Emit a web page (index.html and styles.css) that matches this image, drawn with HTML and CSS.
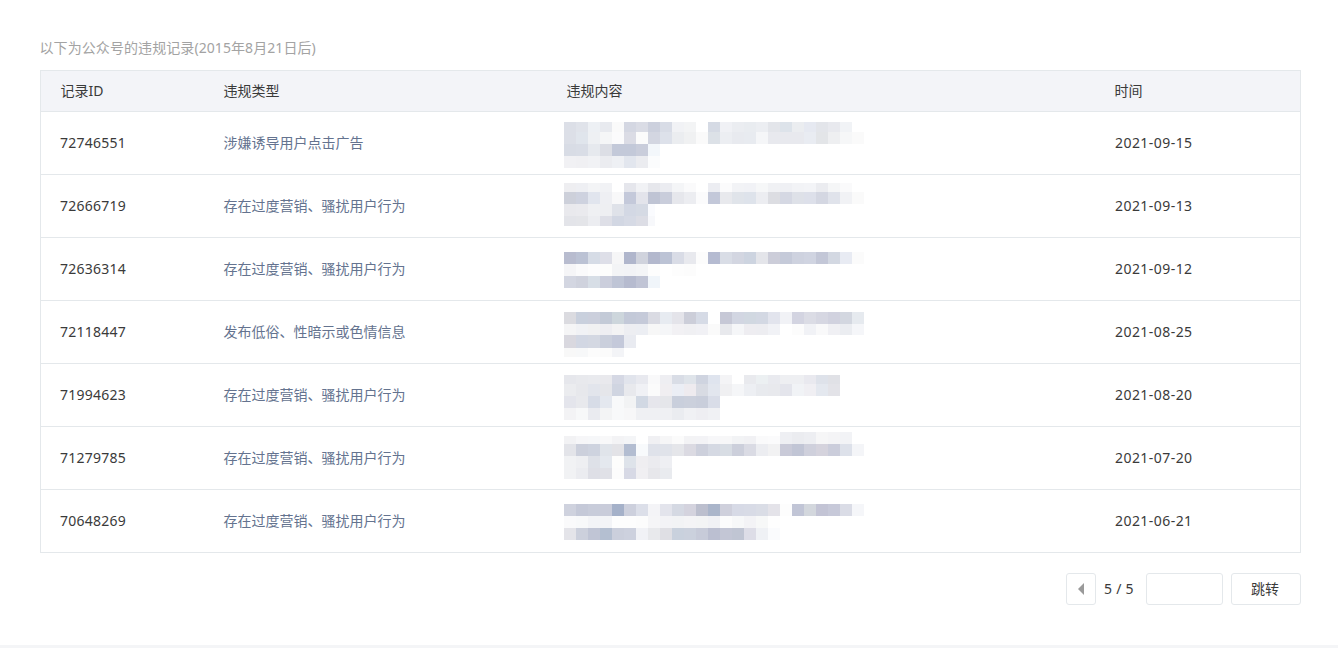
FILE: index.html
```html
<!DOCTYPE html>
<html lang="zh-CN">
<head>
<meta charset="utf-8">
<title>违规记录</title>
<link rel="stylesheet" href="styles.css">
</head>
<body>
<main class="page">
<p class="caption">以下为公众号的违规记录(2015年8月21日后)</p>
<div class="table-wrap">
<table class="records">
<colgroup><col class="col-id"><col class="col-type"><col class="col-content"><col class="col-time"></colgroup>
<thead><tr><th>记录ID</th><th>违规类型</th><th>违规内容</th><th>时间</th></tr></thead>
<tbody>
<tr><td class="id">72746551</td><td class="type">涉嫌诱导用户点击广告</td><td class="content"><svg class="mosaic" viewBox="0 0 312 62">
<g transform="translate(0 10)" class="h10"><rect x="0" fill="#dcdfe7"/><rect x="12" fill="#e0e3ea"/><rect x="24" fill="#edf0f4"/><rect x="36" fill="#e8eaef"/><rect x="48" fill="#fafafa"/><rect x="60" fill="#d4d7e2"/><rect x="72" fill="#dadce5"/><rect x="84" fill="#ccd0dd"/><rect x="96" fill="#d8dce6"/><rect x="108" fill="#f1f2f5"/><rect x="120" fill="#f3f4f5"/><rect x="144" fill="#d5dae4"/><rect x="156" fill="#f0f1f5"/><rect x="168" fill="#ebedf1"/><rect x="180" fill="#e9ecf0"/><rect x="192" fill="#eceef2"/><rect x="204" fill="#e3e5ea"/><rect x="216" fill="#dde3ea"/><rect x="228" fill="#ebedf0"/><rect x="240" fill="#e6e9f1"/><rect x="252" fill="#e3e5ea"/><rect x="264" fill="#e8e9ee"/><rect x="276" fill="#f1f3f6"/></g>
<g transform="translate(0 20)"><rect x="0" fill="#dcdfe7"/><rect x="12" fill="#e0e5ec"/><rect x="24" fill="#eef0f3"/><rect x="36" fill="#f5f6f7"/><rect x="48" fill="#fbfbfc"/><rect x="60" fill="#dbdce5"/><rect x="72" fill="#fbfbfb"/><rect x="84" fill="#d3d6e1"/><rect x="96" fill="#dde1ea"/><rect x="108" fill="#ebedf0"/><rect x="120" fill="#f0f1f2"/><rect x="132" fill="#fafafa"/><rect x="144" fill="#dce1e7"/><rect x="156" fill="#eceef2"/><rect x="168" fill="#e8eaef"/><rect x="180" fill="#e8ebf0"/><rect x="192" fill="#f5f6f8"/><rect x="204" fill="#e8e9ee"/><rect x="216" fill="#e8e9ee"/><rect x="228" fill="#e8e9ee"/><rect x="240" fill="#e9ecf2"/><rect x="252" fill="#e3e5e8"/><rect x="264" fill="#eeeff1"/><rect x="276" fill="#f6f7f8"/><rect x="288" fill="#fafafa"/></g>
<g transform="translate(0 32)"><rect x="0" fill="#d8dce5"/><rect x="12" fill="#d9dde6"/><rect x="24" fill="#e6e9ee"/><rect x="36" fill="#dcdee5"/><rect x="48" fill="#c3c9d9"/><rect x="60" fill="#c3c9d9"/><rect x="72" fill="#c9cddb"/><rect x="84" fill="#f3f7fb"/></g>
<g transform="translate(0 44)"><rect x="0" fill="#f1f1f4"/><rect x="12" fill="#f0f0f3"/><rect x="24" fill="#f1f2f5"/><rect x="36" fill="#ebecf0"/><rect x="48" fill="#eef0f4"/><rect x="60" fill="#e2e6ee"/><rect x="72" fill="#ebecf0"/><rect x="84" fill="#fbfcfd"/></g>
</svg></td><td class="date">2021-09-15</td></tr>
<tr><td class="id">72666719</td><td class="type">存在过度营销、骚扰用户行为</td><td class="content"><svg class="mosaic" viewBox="0 0 312 62">
<g transform="translate(0 8)" class="h9"><rect x="0" fill="#eeeef1"/><rect x="12" fill="#eeeff3"/><rect x="24" fill="#f3f4f6"/><rect x="36" fill="#f1f2f5"/><rect x="60" fill="#e5e6ec"/><rect x="72" fill="#f1f2f5"/><rect x="84" fill="#e6e7ec"/><rect x="96" fill="#ebecf1"/><rect x="108" fill="#f4f5f7"/><rect x="120" fill="#fafafb"/><rect x="144" fill="#ecedf2"/><rect x="156" fill="#fbfbfc"/><rect x="168" fill="#f2f3f6"/><rect x="180" fill="#f1f2f6"/><rect x="192" fill="#f6f7f8"/><rect x="204" fill="#f0f1f4"/><rect x="216" fill="#eff0f4"/><rect x="228" fill="#f2f3f6"/><rect x="240" fill="#f3f4f7"/><rect x="252" fill="#ebecf0"/><rect x="264" fill="#f5f6f7"/><rect x="276" fill="#fafafb"/></g>
<g transform="translate(0 17)"><rect x="0" fill="#cdd0da"/><rect x="12" fill="#ced2df"/><rect x="24" fill="#e1e5ee"/><rect x="36" fill="#eeeff3"/><rect x="48" fill="#f8f8f9"/><rect x="60" fill="#c4c9da"/><rect x="72" fill="#e3e4eb"/><rect x="84" fill="#bfc4d4"/><rect x="96" fill="#c9cddb"/><rect x="108" fill="#e6e7ec"/><rect x="120" fill="#ecedf1"/><rect x="132" fill="#fbfbfc"/><rect x="144" fill="#c3c8d9"/><rect x="156" fill="#e8e9ed"/><rect x="168" fill="#e0e4ea"/><rect x="180" fill="#dee3eb"/><rect x="192" fill="#ecedf1"/><rect x="204" fill="#dcdde2"/><rect x="216" fill="#d5d8e3"/><rect x="228" fill="#dee1e8"/><rect x="240" fill="#dde0ea"/><rect x="252" fill="#d4d7e2"/><rect x="264" fill="#e0e3eb"/><rect x="276" fill="#f1f2f5"/><rect x="288" fill="#fafafa"/></g>
<g transform="translate(0 29)"><rect x="0" fill="#e9e9ed"/><rect x="12" fill="#eaeaee"/><rect x="24" fill="#eff0f3"/><rect x="36" fill="#eeeff2"/><rect x="48" fill="#dfe2e9"/><rect x="60" fill="#d3d8e4"/><rect x="72" fill="#d5dae4"/><rect x="84" class="w7" fill="#fafbfe"/></g>
<g transform="translate(0 41)" class="h10"><rect x="0" fill="#e3e4e9"/><rect x="12" fill="#e4e5e9"/><rect x="24" fill="#ecedf1"/><rect x="36" fill="#dedfe7"/><rect x="48" fill="#d2d7e3"/><rect x="60" fill="#d6dae5"/><rect x="72" fill="#dcdde5"/><rect x="84" class="w7" fill="#f7f8fb"/></g>
</svg></td><td class="date">2021-09-13</td></tr>
<tr><td class="id">72636314</td><td class="type">存在过度营销、骚扰用户行为</td><td class="content"><svg class="mosaic" viewBox="0 0 312 62">
<g transform="translate(0 14)"><rect x="0" fill="#b8bccf"/><rect x="12" fill="#bbc2d4"/><rect x="24" fill="#d6dce6"/><rect x="36" fill="#dedfe8"/><rect x="48" fill="#f6f6f7"/><rect x="60" fill="#b0b6cc"/><rect x="72" fill="#d0d3dd"/><rect x="84" fill="#b3b8cd"/><rect x="96" fill="#bcc3d5"/><rect x="108" fill="#d9dce6"/><rect x="120" fill="#e8e9ee"/><rect x="132" fill="#fcfcfc"/><rect x="144" fill="#b5bbd1"/><rect x="156" fill="#d9dde6"/><rect x="168" fill="#d3d6e1"/><rect x="180" fill="#cdd4e0"/><rect x="192" fill="#e4e5ea"/><rect x="204" fill="#cccdd9"/><rect x="216" fill="#c5cad9"/><rect x="228" fill="#ced2df"/><rect x="240" fill="#d0d4e1"/><rect x="252" fill="#c3c7d7"/><rect x="264" fill="#d3d8e2"/><rect x="276" fill="#e8ebf3"/><rect x="288" fill="#fbfbfb"/></g>
<g transform="translate(0 26)"><rect x="0" fill="#f5f5f7"/><rect x="12" fill="#fafafb"/><rect x="24" fill="#fdfdfd"/><rect x="36" fill="#fdfdfc"/><rect x="48" fill="#f3f4f6"/><rect x="60" fill="#f2f3f6"/><rect x="72" fill="#f4f5f7"/><rect x="84" fill="#fdfdfd"/><rect x="108" fill="#fdfdfd"/><rect x="120" fill="#fcfcfc"/></g>
<g transform="translate(0 38)"><rect x="0" fill="#d3d6e1"/><rect x="12" fill="#cfd2dd"/><rect x="24" fill="#d7dee6"/><rect x="36" fill="#cbcedc"/><rect x="48" fill="#bfc5d6"/><rect x="60" fill="#b6bbcf"/><rect x="72" fill="#c0c4d5"/><rect x="84" fill="#f0f5fa"/></g>
</svg></td><td class="date">2021-09-12</td></tr>
<tr><td class="id">72118447</td><td class="type">发布低俗、性暗示或色情信息</td><td class="content"><svg class="mosaic" viewBox="0 0 312 62">
<g transform="translate(0 11)"><rect x="0" fill="#dbdbe0"/><rect x="12" fill="#c9d0dd"/><rect x="24" fill="#cbcfdc"/><rect x="36" fill="#c3cad7"/><rect x="48" fill="#cdd6dc"/><rect x="60" fill="#c3c9d8"/><rect x="72" fill="#c5cad9"/><rect x="84" fill="#dadbe3"/><rect x="96" fill="#e7ebf1"/><rect x="108" fill="#e4e4ea"/><rect x="120" fill="#ccced9"/><rect x="132" fill="#d6dbe6"/><rect x="156" fill="#c6c8d6"/><rect x="168" fill="#d2d6e2"/><rect x="180" fill="#d1d8e1"/><rect x="192" fill="#d3d8e3"/><rect x="204" fill="#e2e4ed"/><rect x="216" fill="#f1f2f6"/><rect x="228" fill="#d3d4e1"/><rect x="240" fill="#dbdce5"/><rect x="252" fill="#d6d7e2"/><rect x="264" fill="#d1d2df"/><rect x="276" fill="#d3d7e0"/><rect x="288" fill="#e6eaef"/></g>
<g transform="translate(0 23)" class="h11"><rect x="0" fill="#f5f5f6"/><rect x="12" fill="#f1f2f5"/><rect x="24" fill="#f1f1f2"/><rect x="36" fill="#eeeef2"/><rect x="48" fill="#f3f3f4"/><rect x="60" fill="#edeef2"/><rect x="72" fill="#eceef3"/><rect x="84" fill="#f7f7f7"/><rect x="96" fill="#f5f6f8"/><rect x="108" fill="#f2f1f4"/><rect x="120" fill="#f0f0f3"/><rect x="132" fill="#f1f1f5"/><rect x="144" fill="#fafafa"/><rect x="156" fill="#e8e9ed"/><rect x="168" fill="#f5f6f8"/><rect x="180" fill="#eeedf1"/><rect x="192" fill="#ededf1"/><rect x="204" fill="#f1f2f6"/><rect x="228" fill="#fcfcfc"/><rect x="240" fill="#f1f2f6"/><rect x="252" fill="#f9f9fa"/><rect x="264" fill="#f0f0f4"/><rect x="276" fill="#ebedf1"/><rect x="288" fill="#f5f6f9"/></g>
<g transform="translate(0 34)" class="h13"><rect x="0" fill="#d9d8df"/><rect x="12" fill="#d2d7e3"/><rect x="24" fill="#d4d8e2"/><rect x="36" fill="#cacfdc"/><rect x="48" fill="#c4c9da"/><rect x="60" fill="#e9ebf1"/></g>
<g transform="translate(0 47)" class="h9"><rect x="0" fill="#f8f8f8"/><rect x="12" fill="#f7f8f9"/><rect x="24" fill="#fcfcfc"/><rect x="36" fill="#fbfbfb"/><rect x="48" fill="#f3f4f7"/></g>
</svg></td><td class="date">2021-08-25</td></tr>
<tr><td class="id">71994623</td><td class="type">存在过度营销、骚扰用户行为</td><td class="content"><svg class="mosaic" viewBox="0 0 312 62">
<g transform="translate(0 11)" class="h9"><rect x="0" fill="#e6e7ec"/><rect x="12" fill="#e8e9ed"/><rect x="24" fill="#e9eaee"/><rect x="36" fill="#e9e9ed"/><rect x="48" fill="#d5d8e4"/><rect x="60" fill="#e1e4ec"/><rect x="72" fill="#e8e9ef"/><rect x="84" fill="#f9f9fa"/><rect x="96" fill="#eeeef2"/><rect x="108" fill="#d9dde6"/><rect x="120" fill="#dfe4ea"/><rect x="132" fill="#cfd4e0"/><rect x="144" fill="#dfe4ee"/><rect x="156" fill="#f4f4f6"/><rect x="180" fill="#e9eaee"/><rect x="192" fill="#ecf0f2"/><rect x="204" fill="#e9eaef"/><rect x="216" fill="#eeeff2"/><rect x="228" fill="#eeeff2"/><rect x="240" fill="#e9e9ef"/><rect x="252" fill="#dee2ea"/><rect x="264" fill="#e0e1e6"/></g>
<g transform="translate(0 20)"><rect x="0" fill="#ebecef"/><rect x="12" fill="#e7e8ec"/><rect x="24" fill="#e2e5ec"/><rect x="36" fill="#e5e6ea"/><rect x="48" fill="#d0d5e1"/><rect x="60" fill="#e8e9ed"/><rect x="72" fill="#f0f1f5"/><rect x="84" fill="#fbfbfb"/><rect x="96" fill="#f0eef1"/><rect x="108" fill="#ebeef5"/><rect x="120" fill="#eeebef"/><rect x="132" fill="#d8dbe3"/><rect x="144" fill="#e2e6ee"/><rect x="156" fill="#f0f0f2"/><rect x="168" fill="#f5f6f8"/><rect x="180" fill="#edeff3"/><rect x="192" fill="#e8eaee"/><rect x="204" fill="#e8e9ed"/><rect x="216" fill="#e4e5ec"/><rect x="228" fill="#f1f3f6"/><rect x="240" fill="#f0eff3"/><rect x="252" fill="#e4e8ef"/><rect x="264" fill="#e3e3e8"/></g>
<g transform="translate(0 32)"><rect x="0" fill="#e4e5ec"/><rect x="12" fill="#e8e9ed"/><rect x="24" fill="#d7dce7"/><rect x="36" fill="#e4e8ef"/><rect x="48" fill="#f8f9fa"/><rect x="60" fill="#f2f3f4"/><rect x="72" fill="#d1d8e3"/><rect x="84" fill="#e6e6ec"/><rect x="96" fill="#e5e6ea"/><rect x="108" fill="#c9cfdc"/><rect x="120" fill="#cbd0dc"/><rect x="132" fill="#c9cedb"/><rect x="144" fill="#d9dde8"/></g>
<g transform="translate(0 44)"><rect x="0" fill="#f3f3f5"/><rect x="12" fill="#f7f8f9"/><rect x="24" fill="#eaebf0"/><rect x="36" fill="#f3f4f5"/><rect x="48" fill="#f8f9fa"/><rect x="60" fill="#f7f7f8"/><rect x="72" fill="#eff0f3"/><rect x="84" fill="#eff0f3"/><rect x="96" fill="#eff0f3"/><rect x="108" fill="#eaecf0"/><rect x="120" fill="#f0f1f4"/><rect x="132" fill="#eeeef2"/><rect x="144" fill="#f0f1f4"/></g>
</svg></td><td class="date">2021-08-20</td></tr>
<tr><td class="id">71279785</td><td class="type">存在过度营销、骚扰用户行为</td><td class="content"><svg class="mosaic" viewBox="0 0 312 62">
<g transform="translate(0 9)" class="h8"><rect x="0" fill="#f2f2f4"/><rect x="12" fill="#f6f6f8"/><rect x="24" fill="#f6f7f9"/><rect x="36" fill="#f8f8f9"/><rect x="48" fill="#f3f3f5"/><rect x="60" fill="#f4f5f7"/><rect x="84" fill="#f0f0f3"/><rect x="96" fill="#f6f6f7"/><rect x="108" fill="#fbfbfb"/><rect x="120" fill="#f3f3f5"/><rect x="132" fill="#f3f3f6"/><rect x="144" fill="#f7f7f9"/><rect x="156" fill="#f7f7f8"/><rect x="168" fill="#f2f3f5"/><rect x="180" fill="#f1f1f4"/><rect x="192" fill="#fafafb"/><rect x="204" fill="#fbfbfc"/></g>
<g transform="translate(0 5)"><rect x="216" fill="#eeeff3"/><rect x="228" fill="#ebecf0"/><rect x="240" fill="#edeef2"/><rect x="252" fill="#f6f6f7"/><rect x="264" fill="#f4f4f6"/><rect x="276" fill="#f2f3f6"/></g>
<g transform="translate(0 17)"><rect x="0" fill="#e3e4e9"/><rect x="12" fill="#ccd0dc"/><rect x="24" fill="#ced3df"/><rect x="36" fill="#e0e4ea"/><rect x="48" fill="#e3e3e7"/><rect x="60" fill="#b3bdd1"/><rect x="72" fill="#f8fafc"/><rect x="84" fill="#dfe2ea"/><rect x="96" fill="#e0e3ea"/><rect x="108" fill="#e5e6ea"/><rect x="120" fill="#dbdae2"/><rect x="132" fill="#cdd0dc"/><rect x="144" fill="#d5d9e3"/><rect x="156" fill="#d8dde4"/><rect x="168" fill="#cccfdb"/><rect x="180" fill="#dadbe4"/><rect x="192" fill="#ecedf1"/><rect x="204" fill="#f2f2f3"/><rect x="216" fill="#c9cad8"/><rect x="228" fill="#c1c5d5"/><rect x="240" fill="#cfd0dc"/><rect x="252" fill="#d5d3dd"/><rect x="264" fill="#cbcddb"/><rect x="276" fill="#dde1ea"/><rect x="288" fill="#f4f5f8"/></g>
<g transform="translate(0 29)"><rect x="0" fill="#f1f2f4"/><rect x="12" fill="#eeeff2"/><rect x="24" fill="#dee1e8"/><rect x="36" fill="#e4e8ee"/><rect x="48" fill="#fdfdfc"/><rect x="60" fill="#dee3ea"/><rect x="72" fill="#efeef1"/><rect x="84" fill="#ebebef"/><rect x="96" fill="#eeeff3"/></g>
<g transform="translate(0 41)" class="h11"><rect x="0" fill="#f1f2f4"/><rect x="12" fill="#ebecf0"/><rect x="24" fill="#dedfe6"/><rect x="36" fill="#e0e1e7"/><rect x="48" fill="#fcfcfc"/><rect x="60" fill="#d7d9e5"/><rect x="72" fill="#f0eff2"/><rect x="84" fill="#e7e7eb"/><rect x="96" fill="#e9ebef"/></g>
</svg></td><td class="date">2021-07-20</td></tr>
<tr><td class="id">70648269</td><td class="type">存在过度营销、骚扰用户行为</td><td class="content"><svg class="mosaic" viewBox="0 0 312 62">
<g transform="translate(0 14)"><rect x="0" fill="#cfd2de"/><rect x="12" fill="#c5c9d8"/><rect x="24" fill="#c8ccda"/><rect x="36" fill="#c9ccda"/><rect x="48" fill="#a5b1c9"/><rect x="60" fill="#cdd0dd"/><rect x="72" fill="#dcdfe9"/><rect x="84" fill="#f4f4f7"/><rect x="96" fill="#e3e4ec"/><rect x="108" fill="#d5d9e3"/><rect x="120" fill="#d4d3de"/><rect x="132" fill="#bcbfce"/><rect x="144" fill="#aab5ca"/><rect x="156" fill="#cfd0dc"/><rect x="168" fill="#d7dae6"/><rect x="180" fill="#d8dbe6"/><rect x="192" fill="#dadde6"/><rect x="204" fill="#e4e3e9"/><rect x="216" fill="#fdfdfd"/><rect x="228" fill="#c1c5d6"/><rect x="240" fill="#d3d7dd"/><rect x="252" fill="#c3c4d5"/><rect x="264" fill="#c7c9d9"/><rect x="276" fill="#dadce6"/><rect x="288" fill="#f5f6f9"/></g>
<g transform="translate(0 26)"><rect x="0" fill="#fafafb"/><rect x="12" fill="#f8f9fa"/><rect x="24" fill="#f3f4f7"/><rect x="36" fill="#f3f4f7"/><rect x="48" fill="#fdfdfd"/><rect x="60" fill="#fdfdfd"/><rect x="72" fill="#fcfcfc"/><rect x="84" fill="#f5f5f7"/><rect x="96" fill="#f3f3f6"/><rect x="108" fill="#f2f3f5"/><rect x="120" fill="#f4f4f6"/><rect x="132" fill="#f3f4f5"/><rect x="144" fill="#f0f1f5"/><rect x="156" fill="#fcfcfc"/><rect x="168" fill="#f7f8f9"/><rect x="180" fill="#f3f3f6"/><rect x="192" fill="#f7f8f8"/><rect x="204" fill="#fefefe"/></g>
<g transform="translate(0 38)"><rect x="0" fill="#e4e4e9"/><rect x="12" fill="#ccd0dc"/><rect x="24" fill="#c0c5d5"/><rect x="36" fill="#b4bfd1"/><rect x="48" fill="#cbcfdc"/><rect x="60" fill="#cdd1de"/><rect x="72" fill="#f1f2f6"/><rect x="84" fill="#e8e9ec"/><rect x="96" fill="#dfdfe4"/><rect x="108" fill="#c9d1dd"/><rect x="120" fill="#cbd1dd"/><rect x="132" fill="#c7cbd9"/><rect x="144" fill="#bbbfd1"/><rect x="156" fill="#c3c6d5"/><rect x="168" fill="#c0c5d3"/><rect x="180" fill="#dddde7"/><rect x="192" fill="#eff1f5"/><rect x="204" fill="#fafbfd"/></g>
</svg></td><td class="date">2021-06-21</td></tr>
</tbody>
</table>
</div>
<nav class="pager">
<button class="pager-btn pager-prev" type="button" aria-label="上一页"><svg class="pager-arrow" viewBox="0 0 6 12"><path d="M6 0V12L0 6Z"/></svg></button>
<span class="pager-num">5 / 5</span>
<input class="pager-input" type="text">
<button class="pager-btn pager-go" type="button">跳转</button>
</nav>
</main>
</body>
</html>
```
FILE: styles.css
```css
* { box-sizing: border-box; }
html, body { margin: 0; padding: 0; background: #fff; }
body {
  font-family: "Noto Sans", "Noto Sans CJK SC", sans-serif;
  font-size: 14px;
  color: #3a3a3a;
  overflow: hidden;
}
.page {
  height: 648px;
  padding: 40px 37px 40px 40px;
  border-bottom: 3px solid #f4f5f7;
}
.caption {
  margin: 0 0 14px -0.5px;
  height: 16px;
  line-height: 16px;
  color: #a3a3a3;
  letter-spacing: 0.08px;
}
.table-wrap { border: 1px solid #e4e8eb; }
.records {
  width: 1259px;
  table-layout: fixed;
  border-collapse: separate;
  border-spacing: 0;
}
.col-id { width: 163px; }
.col-type { width: 343px; }
.col-content { width: 548px; }
.col-time { width: 205px; }
.records th {
  height: 41px;
  padding: 0 0 2px 19.5px;
  text-align: left;
  font-weight: 400;
  background: #f3f4f8;
  border-bottom: 1px solid #e4e8eb;
}
.records td {
  height: 63px;
  padding: 0 0 2px 19.5px;
  border-bottom: 1px solid #e4e8eb;
}
.records tr:last-child td { height: 62px; border-bottom: 0; }
.records td.id { padding-left: 19px; letter-spacing: 0.25px; }
.records td.type { color: #64738f; }
.records td.date { padding-left: 20px; letter-spacing: 0.45px; }
.records td.content { padding: 0 0 0 17px; }
.mosaic { display: block; width: 312px; height: 62px; }
.mosaic rect { width: 12px; height: 12px; }
.mosaic .h8 rect { height: 8px; }
.mosaic .h9 rect { height: 9px; }
.mosaic .h10 rect { height: 10px; }
.mosaic .h11 rect { height: 11px; }
.mosaic .h13 rect { height: 13px; }
.mosaic .w7 { width: 7px; }
.pager {
  display: flex;
  justify-content: flex-end;
  align-items: center;
  margin-top: 20px;
  height: 32px;
}
.pager-btn, .pager-input {
  height: 32px;
  padding: 0;
  border: 1px solid #e4e8eb;
  border-radius: 3px;
  background: #fff;
  font: inherit;
  color: #3a3a3a;
}
.pager-prev {
  display: flex;
  width: 30px;
  align-items: center;
  justify-content: center;
}
.pager-arrow { width: 6px; height: 12px; fill: #9a9a9a; }
.pager-num { width: 50px; padding: 0 0 2px 8px; letter-spacing: 0.25px; }
.pager-input { width: 77px; margin-right: 8px; }
.pager-go { width: 70px; padding: 0 2px 2px 0; }
```
